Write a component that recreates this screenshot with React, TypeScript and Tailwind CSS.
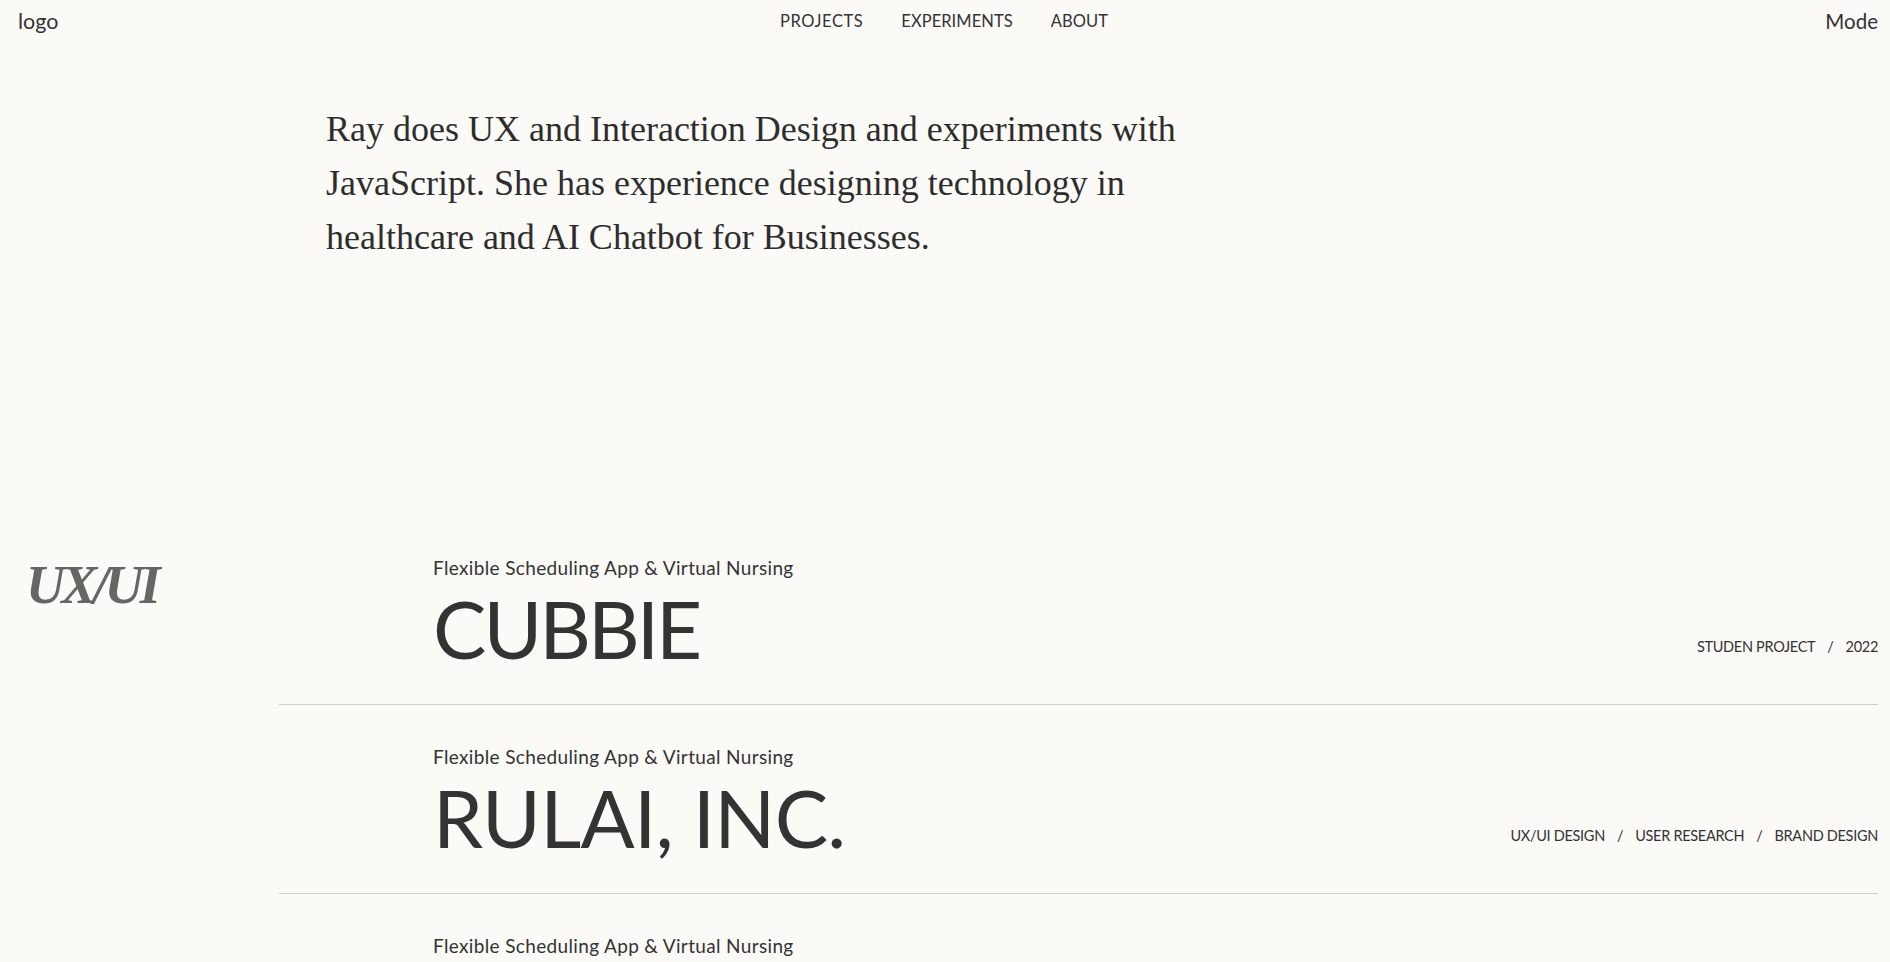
import React from "react";

type Row = { sub: string; title: string; tags: string[]; track: string };

const rows: Row[] = [
  { sub: "Flexible Scheduling App & Virtual Nursing", title: "CUBBIE", tags: ["STUDEN PROJECT", "2022"], track: "tracking-[-3px]" },
  { sub: "Flexible Scheduling App & Virtual Nursing", title: "RULAI, INC.", tags: ["UX/UI DESIGN", "USER RESEARCH", "BRAND DESIGN"], track: "tracking-[-0.75px]" },
  { sub: "Flexible Scheduling App & Virtual Nursing", title: "PROJECT THREE", tags: ["UX/UI DESIGN", "2021"], track: "tracking-[-1.5px]" },
];

export default function App() {
  return (
    <div className="min-h-screen bg-[#fbfaf7] text-[#333333] font-['Lato','Noto_Sans',sans-serif]">
      <header className="flex h-[43px] items-center justify-between pl-[18px] pr-[12px]">
        <div className="w-[192px] text-[21.5px] leading-none">logo</div>
        <nav className="flex gap-[38px] text-[16.5px] leading-none">
          <a className="tracking-[0.6px]">PROJECTS</a>
          <a className="tracking-[0.05px]">EXPERIMENTS</a>
          <a className="tracking-[0.1px]">ABOUT</a>
        </nav>
        <div className="flex w-[200px] justify-end text-[20.5px] leading-none">Mode</div>
      </header>

      <section className="pl-[326px] pt-[59px]">
        <p className="max-w-[880px] font-['Liberation_Serif',serif] text-[36px] leading-[54px] text-[#2d2d2d]">
          Ray does UX and Interaction Design and experiments with JavaScript. She has experience designing technology in healthcare and AI Chatbot for Businesses.
        </p>
      </section>

      <section className="mt-[252px] flex">
        <div className="w-[279px] shrink-0 pl-[26px] pt-[42px]">
          <h2 className="font-['Liberation_Serif',serif] text-[54px] font-bold italic leading-none tracking-[-3.8px] text-[#666666]">
            UX/UI
          </h2>
        </div>
        <div className="flex-1 pr-[12px]">
          {rows.map((r) => (
            <div key={r.title} className="flex items-end justify-between border-b border-[#cfcfcf] pl-[154px] pt-[40px] pb-[35px]">
              <div>
                <div className="text-[19px] leading-[24px] tracking-[0.35px]">{r.sub}</div>
                <div className={`mt-[8px] text-[80px] leading-[81px] ${r.track}`}>{r.title}</div>
              </div>
              <div className="mb-[12px] flex gap-[12px] text-[14.5px] leading-[20px] tracking-[-0.3px]">
                {r.tags.map((t, i) => (
                  <React.Fragment key={t}>
                    {i > 0 && <span>/</span>}
                    <span>{t}</span>
                  </React.Fragment>
                ))}
              </div>
            </div>
          ))}
        </div>
      </section>
    </div>
  );
}
